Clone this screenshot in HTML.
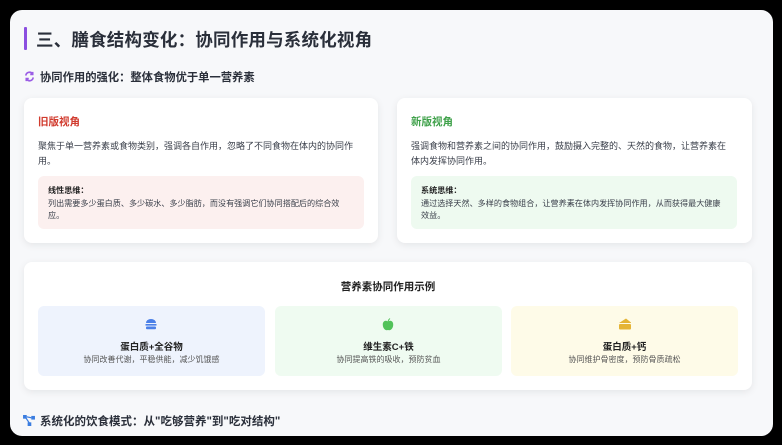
<!DOCTYPE html>
<html><head><meta charset="utf-8"><style>
*{margin:0;padding:0;box-sizing:border-box}
body{width:782px;height:445px;background:#000;font-family:"Liberation Sans","Noto Sans CJK SC",sans-serif;position:relative;overflow:hidden;color:#2b2f38}
.panel{position:absolute;left:10px;top:10px;width:763px;height:426px;background:#f7f8fa;border-radius:12px;overflow:hidden}
.abs{position:absolute}
.bar{left:14px;top:17px;width:3px;height:23px;background:#8b4fe0;border-radius:1px}
h1{position:absolute;left:26px;top:17px;font-size:17.5px;font-weight:bold;color:#2a2f3a;letter-spacing:0.2px}
.sub{position:absolute;left:30px;top:59px;font-size:11.3px;font-weight:bold;color:#2a2f3a}
.card{position:absolute;background:#fff;border-radius:8px;box-shadow:0 2px 8px rgba(0,0,0,0.08)}
.ct{position:absolute;left:14px;top:16px;font-size:10.5px;font-weight:bold}
.cp{position:absolute;left:14px;top:41px;width:326px;font-size:9px;line-height:15px;color:#3a3f4a}
.box{position:absolute;left:14px;top:78px;width:326px;height:53px;border-radius:6px;padding:9px 10px;font-size:8.1px;line-height:12.5px;color:#3a3f4a}
.box b{color:#222}
.sc{position:absolute;top:44px;width:227px;height:70px;border-radius:6px;text-align:center}
.sc .t{position:absolute;top:33px;width:100%;font-size:9.5px;font-weight:bold;color:#222}
.sc .d{position:absolute;top:48px;width:100%;font-size:8px;color:#555}
.sc svg{position:absolute;left:107px;top:12px}
</style></head><body>
<div class="panel">
<div class="abs bar"></div>
<h1>三、膳食结构变化：协同作用与系统化视角</h1>
<svg class="abs" style="left:14px;top:61px" width="11" height="11" viewBox="0 0 12 12"><path d="M2 5 A4 4 0 0 1 9.5 3.5 M9.5 1 V3.8 H6.8 M10 7 A4 4 0 0 1 2.5 8.5 M2.5 11 V8.2 H5.2" stroke="#9b5de5" stroke-width="1.8" fill="none"/></svg>
<div class="sub">协同作用的强化：整体食物优于单一营养素</div>

<div class="card" style="left:14px;top:88px;width:354px;height:145px">
<div class="ct" style="color:#d13b2e">旧版视角</div>
<div class="cp">聚焦于单一营养素或食物类别，强调各自作用，忽略了不同食物在体内的协同作用。</div>
<div class="box" style="background:#fcf0ef"><b>线性思维：</b><br>列出需要多少蛋白质、多少碳水、多少脂肪，而没有强调它们协同搭配后的综合效应。</div>
</div>
<div class="card" style="left:387px;top:88px;width:355px;height:145px">
<div class="ct" style="color:#3fa14a">新版视角</div>
<div class="cp" style="width:322px">强调食物和营养素之间的协同作用，鼓励摄入完整的、天然的食物，让营养素在体内发挥协同作用。</div>
<div class="box" style="background:#eefaf0"><b>系统思维：</b><br>通过选择天然、多样的食物组合，让营养素在体内发挥协同作用，从而获得最大健康效益。</div>
</div>

<div class="card" style="left:14px;top:252px;width:728px;height:128px">
<div class="abs" style="top:17px;width:100%;text-align:center;font-size:10.5px;font-weight:bold;color:#222">营养素协同作用示例</div>
<div class="sc" style="left:14px;background:#eef3fd"><svg width="12" height="12" viewBox="0 0 12 12"><path d="M1 5 A5 4 0 0 1 11 5 Z" fill="#4a7fe8"/><rect x="0.5" y="6" width="11" height="1.6" fill="#4a7fe8"/><rect x="1" y="8.5" width="10" height="2.8" rx="1" fill="#4a7fe8"/></svg><div class="t">蛋白质+全谷物</div><div class="d">协同改善代谢，平稳供能，减少饥饿感</div></div>
<div class="sc" style="left:251px;background:#effbf1"><svg width="12" height="13" viewBox="0 0 12 13"><path d="M6 3.5 C3 1.5 0.5 3.5 0.8 7 C1 10.5 3.5 13 6 12 C8.5 13 11 10.5 11.2 7 C11.5 3.5 9 1.5 6 3.5Z" fill="#52c25a"/><path d="M6 3.5 Q6.5 1.5 8 0.5" stroke="#52c25a" fill="none"/></svg><div class="t">维生素C+铁</div><div class="d">协同提高铁的吸收，预防贫血</div></div>
<div class="sc" style="left:487px;background:#fefbe8"><svg width="14" height="12" viewBox="0 0 14 12"><path d="M1 5 L8 0.5 L13 4.5 V5 Z" fill="#e5b435"/><rect x="1" y="6" width="12" height="5.5" rx="1" fill="#e5b435"/></svg><div class="t">蛋白质+钙</div><div class="d">协同维护骨密度，预防骨质疏松</div></div>
</div>

<svg class="abs" style="left:13px;top:405px" width="12" height="11" viewBox="0 0 13 12"><rect x="0" y="0" width="4" height="4" fill="#3b7de0"/><rect x="9" y="1" width="4" height="4" fill="#3b7de0"/><rect x="5" y="8" width="4" height="4" fill="#3b7de0"/><path d="M3 3 L7 9 M4 2 L9 3" stroke="#3b7de0" stroke-width="1.3"/></svg>
<div class="abs" style="left:30px;top:403px;font-size:11.5px;font-weight:bold;color:#2a2f3a">系统化的饮食模式：从"吃够营养"到"吃对结构"</div>
</div>
</body></html>
